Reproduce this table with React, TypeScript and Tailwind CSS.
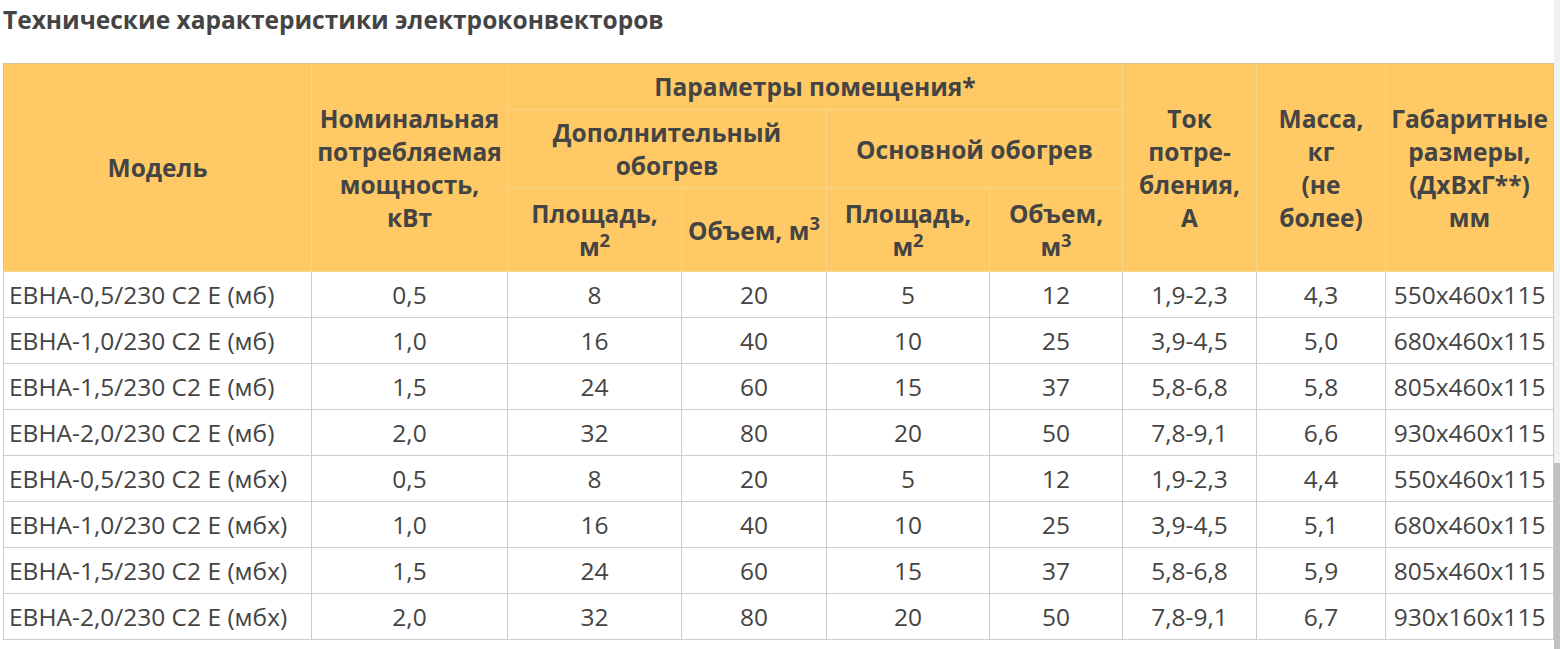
const rows: string[][] = [
  ['ЕВНА-0,5/230 С2 Е (мб)', '0,5', '8', '20', '5', '12', '1,9-2,3', '4,3', '550x460x115'],
  ['ЕВНА-1,0/230 С2 Е (мб)', '1,0', '16', '40', '10', '25', '3,9-4,5', '5,0', '680x460x115'],
  ['ЕВНА-1,5/230 С2 Е (мб)', '1,5', '24', '60', '15', '37', '5,8-6,8', '5,8', '805x460x115'],
  ['ЕВНА-2,0/230 С2 Е (мб)', '2,0', '32', '80', '20', '50', '7,8-9,1', '6,6', '930x460x115'],
  ['ЕВНА-0,5/230 С2 Е (мбх)', '0,5', '8', '20', '5', '12', '1,9-2,3', '4,4', '550x460x115'],
  ['ЕВНА-1,0/230 С2 Е (мбх)', '1,0', '16', '40', '10', '25', '3,9-4,5', '5,1', '680x460x115'],
  ['ЕВНА-1,5/230 С2 Е (мбх)', '1,5', '24', '60', '15', '37', '5,8-6,8', '5,9', '805x460x115'],
  ['ЕВНА-2,0/230 С2 Е (мбх)', '2,0', '32', '80', '20', '50', '7,8-9,1', '6,7', '930x160x115'],
];

// header cells: pale inner lines on the yellow fill
const th = 'border border-[#f6d68c] bg-[#ffca66] px-[5px] text-center align-middle font-bold';

export default function App() {
  return (
    <div
      className="flex h-[649px] w-[1560px] overflow-hidden bg-white text-[#444]"
      style={{ fontFamily: '"Open Sans", "Noto Sans", sans-serif' }}
    >
      <div className="flex-1 pl-[3px] pt-[3px]">
        <h2 className="mb-[27px] text-[24.5px] font-bold leading-[33px]">
          Технические характеристики электроконвекторов
        </h2>

        <table className="w-[1551px] table-fixed border-collapse text-[24.5px] leading-[33px]">
          <colgroup>
            <col className="w-[308px]" />
            <col className="w-[196px]" />
            <col className="w-[174px]" />
            <col className="w-[145px]" />
            <col className="w-[163px]" />
            <col className="w-[133px]" />
            <col className="w-[134px]" />
            <col className="w-[129px]" />
            <col className="w-[168px]" />
          </colgroup>
          <thead>
            <tr>
              <th rowSpan={3} className={`${th} border-t-[#d8c49a] border-l-[#d8c49a]`}>Модель</th>
              <th rowSpan={3} className={`${th} border-t-[#d8c49a]`}>
                Номинальная<br />потребляемая<br />мощность,<br />кВт
              </th>
              <th colSpan={4} className={`${th} border-t-[#d8c49a] py-[6px]`}>Параметры помещения*</th>
              <th rowSpan={3} className={`${th} border-t-[#d8c49a]`}>
                Ток<br />потре-<br />бления,<br />А
              </th>
              <th rowSpan={3} className={`${th} border-t-[#d8c49a]`}>
                Масса,<br />кг<br />(не<br />более)
              </th>
              <th rowSpan={3} className={`${th} border-t-[#d8c49a] border-r-[#d8c49a]`}>
                Габаритные<br />размеры,<br />(ДхВхГ**)<br />мм
              </th>
            </tr>
            <tr>
              <th colSpan={2} className={`${th} py-[6px]`}>
                Дополнительный<br />обогрев
              </th>
              <th colSpan={2} className={`${th} py-[6px]`}>Основной обогрев</th>
            </tr>
            <tr>
              <th className={`${th} py-[8px]`}>
                Площадь,<br />м<sup>2</sup>
              </th>
              <th className={`${th} py-[8px]`}>
                Объем, м<sup>3</sup>
              </th>
              <th className={`${th} py-[8px]`}>
                Площадь,<br />м<sup>2</sup>
              </th>
              <th className={`${th} py-[8px]`}>
                Объем,<br />м<sup>3</sup>
              </th>
            </tr>
          </thead>
          <tbody>
            {rows.map((r, i) => (
              <tr key={i}>
                {r.map((c, j) => (
                  <td
                    key={j}
                    className={`border border-[#cccccc] px-[5px] py-[6px] whitespace-nowrap ${
                      j === 0 ? 'text-left' : 'text-center'
                    }`}
                  >
                    {c}
                  </td>
                ))}
              </tr>
            ))}
          </tbody>
        </table>
      </div>

      {/* page scrollbar */}
      <div className="flex w-[6px] flex-col bg-[#f1f1f1]">
        <div className="h-[463px]" />
        <div className="flex-1 bg-[#c1c1c1]" />
      </div>
    </div>
  );
}
